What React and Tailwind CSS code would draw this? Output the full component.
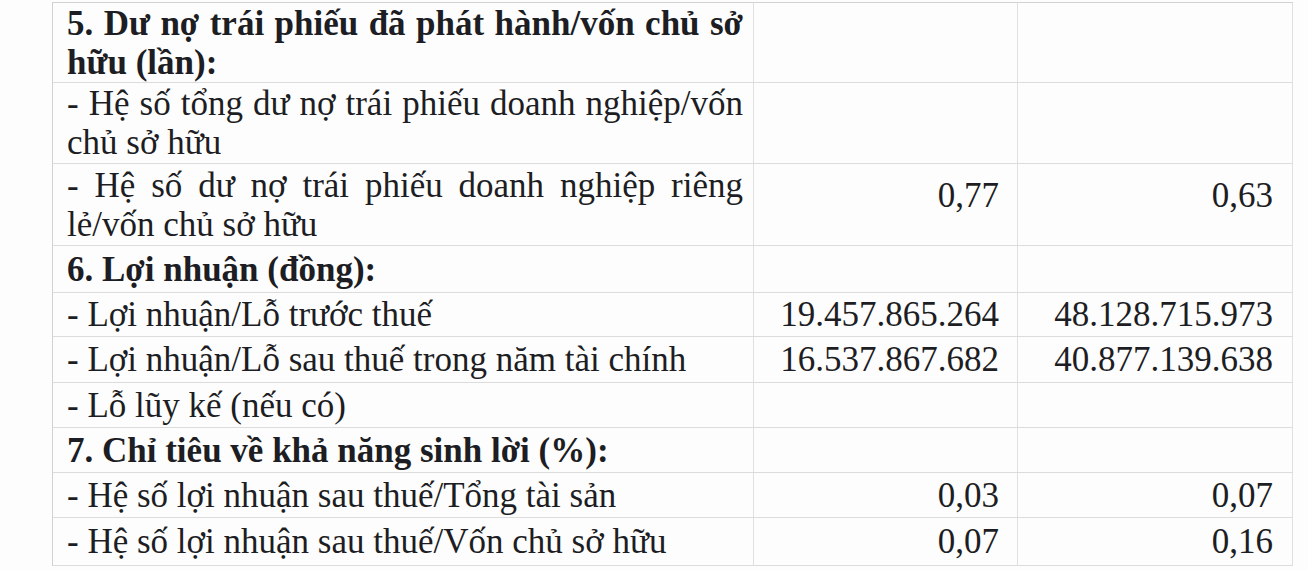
import React from "react";

const rows = [
    { lines: ["5. Dư nợ trái phiếu đã phát hành/vốn chủ sở", "hữu (lần):"], bold: true, h: "h-[80px]" },
    { lines: ["- Hệ số tổng dư nợ trái phiếu doanh nghiệp/vốn", "chủ sở hữu"], h: "h-[81px]" },
    { lines: ["- Hệ số dư nợ trái phiếu doanh nghiệp riêng", "lẻ/vốn chủ sở hữu"], a: "0,77", b: "0,63", h: "h-[82px]", vpad: "pb-[18px]" },
    { lines: ["6. Lợi nhuận (đồng):"], bold: true, h: "h-[47px]" },
    { lines: ["- Lợi nhuận/Lỗ trước thuế"], a: "19.457.865.264", b: "48.128.715.973", h: "h-[44px]" },
    { lines: ["- Lợi nhuận/Lỗ sau thuế trong năm tài chính"], a: "16.537.867.682", b: "40.877.139.638", h: "h-[46px]" },
    { lines: ["- Lỗ lũy kế (nếu có)"], h: "h-[45px]" },
    { lines: ["7. Chỉ tiêu về khả năng sinh lời (%):"], bold: true, h: "h-[45px]" },
    { lines: ["- Hệ số lợi nhuận sau thuế/Tổng tài sản"], a: "0,03", b: "0,07", h: "h-[45px]" },
    { lines: ["- Hệ số lợi nhuận sau thuế/Vốn chủ sở hữu"], a: "0,07", b: "0,16", h: "h-[48px]" },
];

const App = () => {
    return (
        <div className="w-[1308px] h-[570px] overflow-hidden bg-[#fdfdfd] text-[#1d1d24] pt-[2px] pl-[52px]" style={{ fontFamily: '"Liberation Serif", "Times New Roman", serif' }}>
            <div className="w-[1241px] border-t border-l border-[#d2d2d2]">
                {rows.map((row, i) => (
                    <div key={i} className={`grid grid-cols-[700px_264px_276px] border-b border-[#dcdcdc] text-[35px] leading-[39px] ${row.h}`}>
                        <div className={`flex flex-col justify-center pl-[14px] pr-[10px] ${row.bold ? "font-bold" : ""}`}>
                            {row.lines.map((line, j) => (
                                <div key={j} className={row.lines.length > 1 && j === 0 ? "whitespace-nowrap text-justify [text-align-last:justify]" : "whitespace-nowrap"}>
                                    {line}
                                </div>
                            ))}
                        </div>
                        <div className={`flex items-center justify-end pr-[18px] border-l border-[#e0e0e0] ${row.vpad || ""}`}>
                            {row.a}
                        </div>
                        <div className={`flex items-center justify-end pr-[19px] border-l border-r border-[#e0e0e0] ${row.vpad || ""}`}>
                            {row.b}
                        </div>
                    </div>
                ))}
            </div>
        </div>
    );
};

export default App;
